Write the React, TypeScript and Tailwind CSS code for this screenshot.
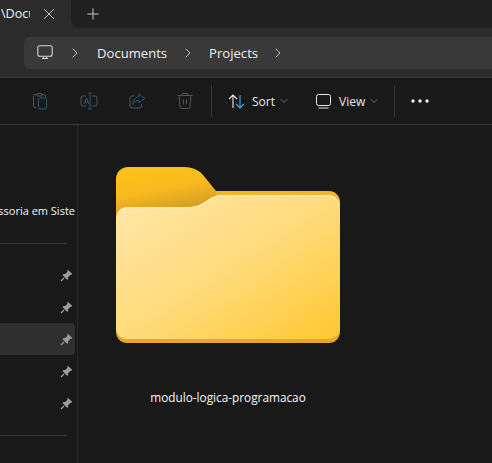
import { ChevronRight, ChevronDown, Plus, X } from 'lucide-react';

const font = { fontFamily: '"Open Sans", "Noto Sans", sans-serif' };

// pin shown next to each quick access entry
function Pin() {
  return (
    <svg width="13" height="13" viewBox="0 0 12 12" className="text-[#979da2]">
      <path fill="currentColor" d="M7.2 0.6 L11.4 4.6 L10.6 5.4 L9.7 5.2 L7.6 7.3 L7.4 9.4 L6.5 10 L2.2 5.6 L2.8 4.8 L4.9 4.6 L7 2.5 L6.6 1.4 Z" />
      <path stroke="currentColor" strokeWidth="1.2" d="M3.8 8.2 L0.9 11.1" />
    </svg>
  );
}

function ToolIcon({ children }: { children: React.ReactNode }) {
  return (
    <div className="w-[48px] flex justify-center">
      <svg width="18" height="18" viewBox="0 0 18 18" fill="none" strokeWidth="1">
        {children}
      </svg>
    </div>
  );
}

function FolderIcon() {
  return (
    <svg width="224" height="176" viewBox="0 0 224 176">
      <defs>
        <linearGradient id="tabFill" x1="0" y1="0" x2="0.35" y2="1">
          <stop offset="0" stopColor="#ffc31a" />
          <stop offset="0.55" stopColor="#f7b91e" />
          <stop offset="1" stopColor="#cf9a22" />
        </linearGradient>
        <linearGradient id="backFill" x1="0" y1="0" x2="0" y2="1">
          <stop offset="0" stopColor="#f3b52a" />
          <stop offset="1" stopColor="#e5a62c" />
        </linearGradient>
        <linearGradient id="frontFill" x1="0" y1="0" x2="1" y2="1">
          <stop offset="0" stopColor="#ffe7aa" />
          <stop offset="0.5" stopColor="#ffdb7c" />
          <stop offset="1" stopColor="#ffc730" />
        </linearGradient>
      </defs>
      <path fill="url(#backFill)" d="M100 24 H213 a11 11 0 0 1 11 11 V165 a11 11 0 0 1 -11 11 H11 a11 11 0 0 1 -11 -11 V60 H100 Z" />
      <path fill="url(#tabFill)" d="M12 0 H68 Q80 0 87 8 L100 24 V50 H0 V12 a12 12 0 0 1 12 -12 Z" />
      <path fill="url(#frontFill)" d="M11 40 H72 Q80 40 87 36 L94 31.5 Q99 28 106 28 H213 a11 11 0 0 1 11 11 V161 a11 11 0 0 1 -11 11 H11 a11 11 0 0 1 -11 -11 V51 a11 11 0 0 1 11 -11 Z" />
      <path fill="none" stroke="#ffeebf" strokeOpacity="0.6" strokeWidth="1.5" d="M3 46 Q6 41 12 41 H72 Q80 41 87 37 L94 32.5 Q99 29 106 29 H212 Q219 29 222 35" />
    </svg>
  );
}

export default function App() {
  return (
    <div className="w-[492px] h-[463px] flex flex-col overflow-hidden bg-[#191919] text-white" style={font}>
      {/* Tab strip */}
      <div className="h-[28px] flex bg-[#2b2b2b] shrink-0">
        <div className="w-[71px] shrink-0 flex items-center pl-[1px] text-[12.6px] text-[#f2f2f2]">
          <span className="w-[29px] overflow-hidden whitespace-nowrap">\Documents</span>
          <X size={18} strokeWidth={1.1} className="ml-[10px] text-[#e6e6e6]" />
        </div>
        <div className="flex-1 bg-[#202020] rounded-bl-lg flex items-center pl-[13px]">
          <Plus size={18} strokeWidth={1.1} className="text-[#e6e6e6]" />
        </div>
      </div>

      {/* Address row */}
      <div className="h-[49px] shrink-0 bg-[#2b2b2b] pl-[24px] py-[9px]">
        <div className="h-[32px] bg-[#393939] rounded-l-md flex items-center pl-[13px] text-[13.1px] text-[#f0f0f0]">
          <svg width="16" height="16" viewBox="0 0 16 16" fill="none" stroke="#d4d4d4" strokeWidth="1.1">
            <rect x="0.8" y="0.8" width="14.4" height="10.4" rx="2" />
            <path d="M5 13.5 H11 M6.5 11.5 V13.5 M9.5 11.5 V13.5" />
          </svg>
          <ChevronRight size={16} strokeWidth={1.3} className="ml-[14px] text-[#d4d4d4]" />
          <span className="ml-[14px] pt-[1px]">Documents</span>
          <ChevronRight size={16} strokeWidth={1.3} className="ml-[13px] text-[#d4d4d4]" />
          <span className="ml-[13px] pt-[1px]">Projects</span>
          <ChevronRight size={16} strokeWidth={1.3} className="ml-[12px] text-[#d4d4d4]" />
        </div>
      </div>

      {/* Command bar */}
      <div className="h-[48px] shrink-0 flex items-center border-y border-[#3a3a3a] pl-[17px] text-[12px] text-[#e8e8e8]">
        <ToolIcon>
          <path stroke="#555" d="M4 15.5 H3 a1.5 1.5 0 0 1 -1.5 -1.5 V4 a1.5 1.5 0 0 1 1.5 -1.5 H5 M5 2.5 a1 1 0 0 1 1 -1 H9 a1 1 0 0 1 1 1 V4 H5 Z M10 2.5 H12 a1.5 1.5 0 0 1 1.5 1.5 V5" />
          <rect x="6.5" y="6" width="8" height="11" rx="1.5" stroke="#245a80" />
        </ToolIcon>
        <ToolIcon>
          <path stroke="#555" d="M6 4 H3 a2 2 0 0 0 -2 2 V12 a2 2 0 0 0 2 2 H6 M12 4 H15 a2 2 0 0 1 2 2 V12 a2 2 0 0 1 -2 2 H12" />
          <path stroke="#245a80" d="M10 1 V17 M8 1 H12 M8 17 H12 M4 12 L6.5 6 L9 12 M5 10 H8" />
        </ToolIcon>
        <ToolIcon>
          <path stroke="#555" d="M13.5 12 V14 a2 2 0 0 1 -2 2 H4 a2 2 0 0 1 -2 -2 V6 a2 2 0 0 1 2 -2 H6" />
          <path stroke="#245a80" d="M11 2 L16.5 6.5 L11 11 V8.5 C8 8.5 6 10 5 12.5 C5 8 7.5 5 11 4.5 Z" />
        </ToolIcon>
        <ToolIcon>
          <path stroke="#555" d="M1.5 3.5 H16.5 M6 3.5 V2.5 a1 1 0 0 1 1 -1 H11 a1 1 0 0 1 1 1 V3.5 M3 3.5 L4 15 a1.5 1.5 0 0 0 1.5 1.5 H12.5 a1.5 1.5 0 0 0 1.5 -1.5 L15 3.5 M7.5 7.5 V12.5 M10.5 7.5 V12.5" />
        </ToolIcon>
        <div className="w-px h-[32px] bg-[#333] ml-[2px]" />
        <svg width="17" height="15" viewBox="0 0 17 15" fill="none" strokeWidth="1.1" className="ml-[16px]">
          <path stroke="#e8e8e8" d="M5 14 V1 M1 5 L5 1 L9 5" />
          <path stroke="#4aa8e8" d="M12 1 V14 M8 10 L12 14 L16 10" />
        </svg>
        <span className="ml-[7px] pt-[2px]">Sort</span>
        <ChevronDown size={12} strokeWidth={1.2} className="ml-[3px] text-[#a8a8a8]" />
        <svg width="15" height="15" viewBox="0 0 15 15" fill="none" stroke="#e8e8e8" strokeWidth="1" className="ml-[26px]">
          <rect x="0.5" y="0.5" width="14" height="11" rx="2" />
          <path d="M2.5 14 H12.5" />
        </svg>
        <span className="ml-[8px] pt-[2px]">View</span>
        <ChevronDown size={12} strokeWidth={1.2} className="ml-[3px] text-[#a8a8a8]" />
        <div className="w-px h-[32px] bg-[#333] ml-[14px]" />
        <svg width="18" height="4" viewBox="0 0 18 4" className="ml-[16px] text-[#f0f0f0]" fill="currentColor">
          <circle cx="2" cy="2" r="1.7" />
          <circle cx="9" cy="2" r="1.7" />
          <circle cx="16" cy="2" r="1.7" />
        </svg>
      </div>

      <div className="flex-1 flex min-h-0">
        {/* Navigation pane, scrolled to the left */}
        <div className="w-[78px] shrink-0 border-r border-[#2b2b2b] overflow-hidden">
          <div className="h-[94px] flex items-end">
            <span className="whitespace-nowrap text-[11px] text-[#f4f4f4] w-[75px] overflow-hidden flex justify-end">ssoria em Siste</span>
          </div>
          <div className="h-px bg-[#3a3a3a] w-[67px] mt-[24px] mb-[15px]" />
          {[0, 1, 2, 3, 4].map((i) => (
            <div key={i} className={`h-[32px] w-[75px] flex items-center justify-end pr-[2px] ${i === 2 ? 'bg-[#2f2f2f] rounded-r' : ''}`}>
              <Pin />
            </div>
          ))}
          <div className="h-px bg-[#3a3a3a] w-[67px] mt-[16px]" />
        </div>

        {/* Folder contents */}
        <div className="flex-1 pl-[38px] pt-[42px]">
          <FolderIcon />
          <p className="w-[224px] mt-[46px] text-center text-[11.8px] text-[#f8f8f8] whitespace-nowrap">modulo-logica-programacao</p>
        </div>
      </div>
    </div>
  );
}
